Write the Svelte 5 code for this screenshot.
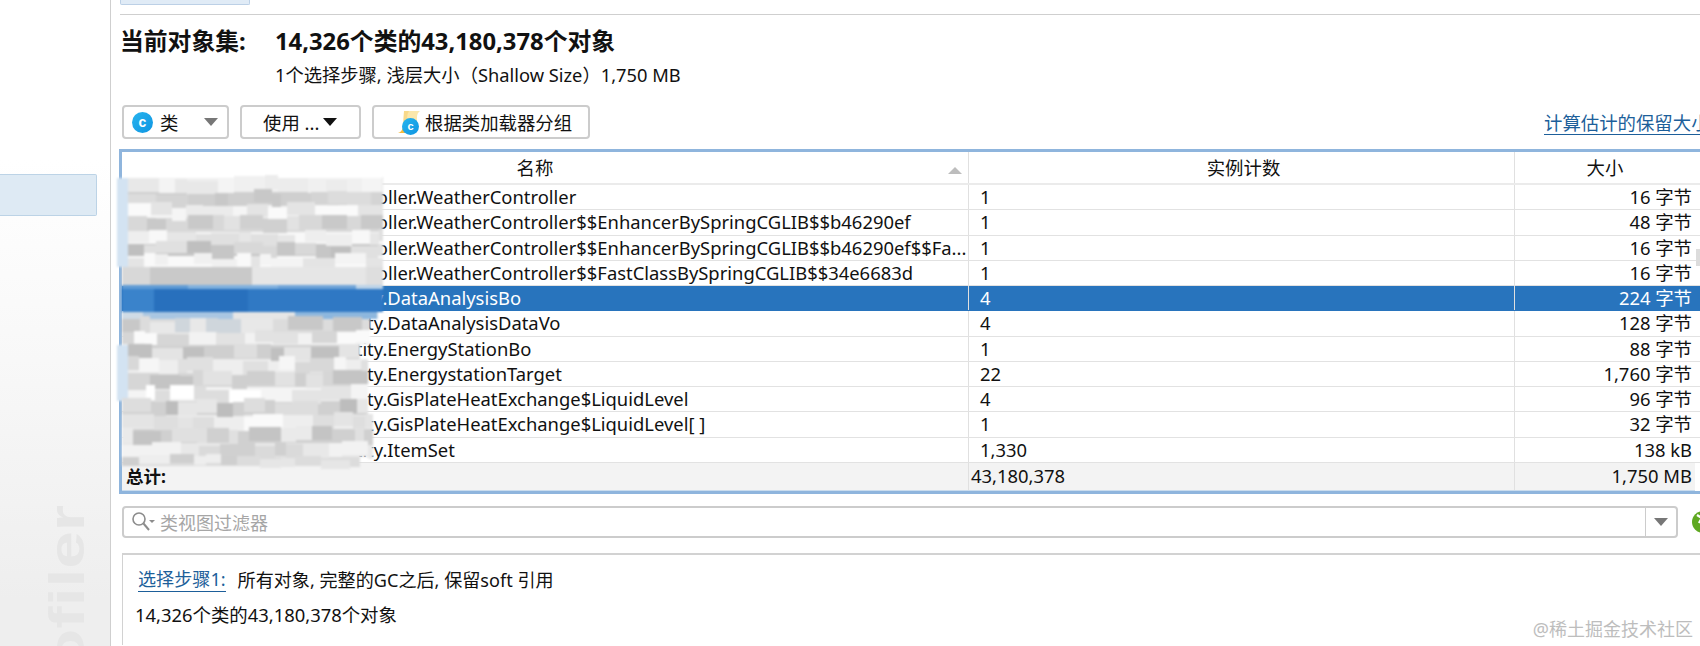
<script>
  // class histogram rows, name is only the part that is not blurred out
  const rows = [
    { name: 'troller.WeatherController', count: '1', size: '16 字节', pkg: 'ctl' },
    { name: 'troller.WeatherController$$EnhancerBySpringCGLIB$$b46290ef', count: '1', size: '48 字节', pkg: 'ctl' },
    { name: 'troller.WeatherController$$EnhancerBySpringCGLIB$$b46290ef$$Fa...', count: '1', size: '16 字节', pkg: 'ctl' },
    { name: 'troller.WeatherController$$FastClassBySpringCGLIB$$34e6683d', count: '1', size: '16 字节', pkg: 'ctl' },
    { name: 'entity.DataAnalysisBo', count: '4', size: '224 字节', pkg: 'ent', selected: true },
    { name: 'entity.DataAnalysisDataVo', count: '4', size: '128 字节', pkg: 'ent' },
    { name: 'entity.EnergyStationBo', count: '1', size: '88 字节', pkg: 'ent' },
    { name: 'entity.EnergystationTarget', count: '22', size: '1,760 字节', pkg: 'ent' },
    { name: 'entity.GisPlateHeatExchange$LiquidLevel', count: '4', size: '96 字节', pkg: 'ent' },
    { name: 'entity.GisPlateHeatExchange$LiquidLevel[ ]', count: '1', size: '32 字节', pkg: 'ent' },
    { name: 'entity.ItemSet', count: '1,330', size: '138 kB', pkg: 'ent' }
  ];

  // blurred-out package names: height, right edge, left tint, palette, straight edges
  const bands = [
    [14, 383, 1, ['#f0f0f0', '#ececec', '#f4f4f4', '#e8e8e8']],
    [13, 383, 1, ['#cfcfcf', '#c8c8c8', '#d4d4d4', '#dcdcdc']],
    [13, 383, 1, ['#f5f5f5', '#ebebeb', '#e4e4e4', '#fafafa']],
    [14, 383, 1, ['#d8d8d8', '#c9c9c9', '#e2e2e2', '#d0d0d0']],
    [12, 383, 1, ['#f8f8f8', '#eeeeee', '#e6e6e6', '#e0e0e0']],
    [12, 383, 1, ['#c6c6c6', '#d8d8d8', '#bfbfbf', '#e0e0e0']],
    [11, 383, 1, ['#f9f9f9', '#f0f0f0', '#e4e4e4', '#f4f4f4']],
    [18, 383, 0, ['#d8d8d8', '#c9c9c9', '#e6e6e6', '#dedede'], 1],
    [4, 383, 0, ['#7fb0de', '#6ea3d8', '#bcd3e8', '#5f9bd5'], 1],
    [23, 383, 0, ['#3079c4', '#2f78c4', '#3a83cb', '#2870bd'], 1],
    [7, 378, 0, ['#8db7de', '#cfdbe6', '#a9c6e2', '#e6e6e6'], 1],
    [14, 370, 0, ['#dcdcdc', '#c8c8c8', '#e8e8e8', '#cfd6dc']],
    [12, 370, 0, ['#f2f2f2', '#e2e2e2', '#d6d6d6', '#fafafa']],
    [14, 360, 1, ['#cfcfcf', '#dedede', '#c0c0c0', '#e4e4e4']],
    [14, 368, 1, ['#eeeeee', '#e0e0e0', '#f6f6f6', '#d8d8d8']],
    [14, 368, 1, ['#d6d6d6', '#c4c4c4', '#e2e2e2', '#cfcfcf']],
    [14, 368, 1, ['#f4f4f4', '#e4e4e4', '#ffffff', '#dddddd']],
    [14, 368, 0, ['#d0d0d0', '#dddddd', '#bdbdbd', '#e6e6e6']],
    [14, 373, 0, ['#eeeeee', '#fafafa', '#dedede', '#e4e4e4']],
    [14, 373, 0, ['#d0d0d0', '#e0e0e0', '#c4c4c4', '#eaeaea']],
    [14, 373, 0, ['#e8e8e8', '#f2f2f2', '#dadada', '#d0d0d0']],
    [9, 360, 0, ['#dcdcdc', '#e6e6e6', '#cfcfcf', '#eeeeee']]
  ];

  let seed = 11;
  function rand(n) {
    seed = (seed * 1103 + 12345) % 65536;
    return (seed >> 6) % n;
  }

  const mosaic = bands.map(([h, right, tint, palette, straight]) => {
    // untinted bands leave the table's blue edge showing
    const inset = tint ? 0 : 5;
    const width = right - 117 - inset;
    const tiles = [];
    let used = 0;
    if (tint) {
      tiles.push({ w: 11, c: '#d3e3f2', dy: 0 });
      used = 11;
    }
    while (used < width) {
      const w = Math.min(9 + rand(24), width - used);
      tiles.push({ w, c: palette[rand(palette.length)], dy: straight ? 0 : rand(7) - 3 });
      used += w;
    }
    return { h, width, inset, base: palette[0], tiles };
  });
</script>

<div class="page">
  <aside class="sidebar">
    <div class="side-item"></div>
    <div class="brand">Profiler</div>
  </aside>

  <main class="content">
    <div class="tab"></div>
    <div class="rule"></div>

    <div class="title">
      <span class="title-label">当前对象集:</span>
      <span>14,326个类的43,180,378个对象</span>
    </div>
    <div class="subtitle">1个选择步骤, 浅层大小（Shallow Size）1,750 MB</div>

    <div class="toolbar">
      <button class="btn btn-class">
        <span class="class-icon">c</span>
        <span>类</span>
        <span class="caret gray"></span>
      </button>
      <button class="btn btn-use">
        <span>使用 ...</span>
        <span class="caret"></span>
      </button>
      <button class="btn btn-group">
        <span class="group-icon">
          <svg width="24" height="24" viewBox="0 0 24 24">
            <path d="M7 1h16q-3 2-3 6v12H6z" fill="#fbe7ab" />
            <path d="M7 1h5q-2 3-2 7v11H6z" fill="#f8d98a" />
            <path d="M1 23q4-1 5-6h12v6z" fill="#f6bb3c" />
          </svg>
          <span class="class-icon small">c</span>
        </span>
        <span>根据类加载器分组</span>
      </button>
      <span class="link estimate">计算估计的保留大小</span>
    </div>

    <div class="table">
      <div class="row head">
        <div class="cell name-head">名称<span class="sort"></span></div>
        <div class="cell center count-head">实例计数</div>
        <div class="cell center">大小</div>
      </div>
      {#each rows as row}
        <div class="row" class:selected={row.selected}>
          <div class="cell name {row.pkg}">{row.name}</div>
          <div class="cell count">{row.count}</div>
          <div class="cell size">{row.size}</div>
        </div>
      {/each}
      <div class="row total">
        <div class="cell total-label">总计:</div>
        <div class="cell total-count">43,180,378</div>
        <div class="cell size">1,750 MB</div>
      </div>
      <div class="mosaic">
        {#each mosaic as band}
          <div class="band" style="height:{band.h}px;width:{band.width}px;margin-left:{band.inset}px;background:{band.base}">
            {#each band.tiles as t}
              <span style="width:{t.w}px;background:{t.c};translate:0 {t.dy}px"></span>
            {/each}
          </div>
        {/each}
      </div>
      <div class="scroll-thumb"></div>
    </div>

    <div class="filter-row">
      <div class="filter">
        <svg class="search" width="24" height="22" viewBox="0 0 24 22" fill="none">
          <circle cx="8" cy="8" r="6" stroke="#8c8c8c" stroke-width="1.6" />
          <path d="M12.5 12.5L18 19" stroke="#8c8c8c" stroke-width="2" />
          <path d="M18 9h6l-3 3z" fill="#8c8c8c" />
        </svg>
        <span class="placeholder">类视图过滤器</span>
        <div class="filter-drop"><span class="caret gray"></span></div>
      </div>
      <svg class="go" width="22" height="22" viewBox="0 0 22 22">
        <circle cx="11" cy="11" r="11" fill="#5fa821" />
        <path d="M5 4l5 3-3 5" fill="none" stroke="#fff" stroke-width="2.4" />
      </svg>
    </div>

    <section class="steps">
      <div class="step"><span class="link">选择步骤1:</span><span class="step-text">所有对象, 完整的GC之后, 保留soft 引用</span></div>
      <div class="result">14,326个类的43,180,378个对象</div>
      <div class="watermark">@稀土掘金技术社区</div>
    </section>
  </main>
</div>

<style>
  :global(body) {
    margin: 0;
    background: #fff;
  }

  .page {
    display: flex;
    width: 1700px;
    height: 646px;
    overflow: hidden;
    color: #111;
    font-family: "Noto Sans", "Noto Sans CJK SC", sans-serif;
    font-size: 18.4px;
  }

  /* ========== Sidebar ========== */
  .sidebar {
    position: relative;
    flex: 0 0 110px;
    box-sizing: content-box;
    border-right: 1px solid #cfcfcf;
    background: linear-gradient(#fff 160px, #f8f8f8 360px, #eeeeee 600px);
    overflow: hidden;
  }

  .side-item {
    box-sizing: border-box;
    width: 97px;
    height: 42px;
    margin-top: 174px;
    background: #deeaf4;
    border: 1px solid #bcd3e6;
    border-left: none;
    border-radius: 0 2px 2px 0;
  }

  .brand {
    position: absolute;
    top: 505px;
    left: 42px;
    writing-mode: vertical-rl;
    transform-origin: top;
    transform: scaleY(1.35) translateY(100%) rotate(180deg);
    font-family: "Liberation Sans", sans-serif;
    font-size: 50px;
    font-weight: 700;
    line-height: 50px;
    color: #e6e6e6;
  }

  /* ========== Main ========== */
  .content {
    flex: 1;
    min-width: 0;
    padding-left: 8px;
    position: relative;
  }

  .tab {
    box-sizing: border-box;
    width: 130px;
    height: 5px;
    margin-left: 1px;
    background: #e0ebf6;
    border: 1px solid #bcd0e6;
    border-top: none;
    border-radius: 0 0 2px 2px;
  }

  .rule {
    height: 1px;
    margin: 9px 0 0 1px;
    background: #cfcfcf;
  }

  .title {
    display: flex;
    margin: 10px 0 0 1px;
    font-size: 23.8px;
    font-weight: 700;
    line-height: 32px;
  }

  .title-label {
    width: 155px;
  }

  .subtitle {
    margin: 6px 0 0 156px;
    font-size: 18.3px;
    line-height: 24px;
  }

  .toolbar {
    display: flex;
    align-items: center;
    margin: 18px 0 0 3px;
    height: 34px;
    position: relative;
  }

  .btn {
    display: flex;
    align-items: center;
    box-sizing: border-box;
    height: 34px;
    padding: 0;
    background: #fff;
    border: 2px solid #cccccc;
    border-radius: 4px;
    color: #111;
    font: inherit;
  }

  .btn-class {
    width: 107px;
    padding-left: 8px;
    margin-right: 11px;
  }

  .btn-class .caret {
    margin-left: 26px;
  }

  .btn-use {
    width: 121px;
    padding-left: 21px;
    margin-right: 11px;
  }

  .btn-use .caret {
    margin-left: 4px;
  }

  .btn-group {
    width: 218px;
    padding-left: 23px;
  }

  .class-icon {
    display: flex;
    align-items: center;
    justify-content: center;
    width: 21px;
    height: 21px;
    margin-right: 7px;
    border-radius: 50%;
    background: linear-gradient(135deg, #27b4ee, #0f95e2);
    color: #fff;
    font-family: "Liberation Sans", sans-serif;
    font-size: 14px;
    font-weight: 700;
    line-height: 1;
  }

  .class-icon.small {
    position: absolute;
    right: 2px;
    bottom: -1px;
    width: 17px;
    height: 17px;
    margin: 0;
    font-size: 11px;
  }

  .group-icon {
    position: relative;
    width: 24px;
    height: 24px;
    margin-right: 4px;
  }

  .group-icon svg {
    display: block;
  }

  .caret {
    width: 0;
    height: 0;
    border-left: 7px solid transparent;
    border-right: 7px solid transparent;
    border-top: 8px solid #111;
  }

  .caret.gray {
    border-top-color: #777;
  }

  .link {
    color: #1d5f9a;
    border-bottom: 1px solid #1d5f9a;
    line-height: 22px;
  }

  .estimate {
    position: absolute;
    left: 1422px;
    top: 7px;
    white-space: nowrap;
  }

  /* ========== Table ========== */
  .table {
    position: relative;
    margin-top: 10px;
    border-top: 3px solid #8fb5dd;
    border-bottom: 3px solid #8fb5dd;
    border-left: 3px solid #8fb5dd;
  }

  .row {
    display: grid;
    grid-template-columns: 846px 546px 181px;
    box-sizing: border-box;
    height: 25.27px;
    line-height: 24px;
    border-bottom: 1px solid #e2e2e2;
  }

  .row.head {
    height: 33px;
    line-height: 31px;
    border-bottom: 2px solid #ebebeb;
  }

  .row.selected {
    background: #2874bd;
    color: #fff;
    border-bottom-color: #2874bd;
  }

  .row.total {
    height: 28px;
    line-height: 26px;
    background: #f3f3f3;
    border-bottom: 1px solid #c9dcee;
    width: 1573px;
  }

  .cell {
    box-sizing: border-box;
    white-space: nowrap;
    overflow: hidden;
  }

  .cell + .cell {
    border-left: 1px solid #e0e0e0;
  }

  .center {
    text-align: center;
  }

  .count-head {
    padding-left: 4px;
  }

  .name-head {
    position: relative;
    padding-right: 20px;
    text-align: center;
  }

  .sort {
    position: absolute;
    right: 6px;
    top: 15px;
    border-left: 7px solid transparent;
    border-right: 7px solid transparent;
    border-bottom: 7px solid #bdbdbd;
  }

  .name.ctl {
    padding-left: 241px;
  }

  .name.ent {
    padding-left: 212px;
  }

  .count {
    padding-left: 11px;
  }

  .size {
    padding-right: 3px;
    text-align: right;
  }

  .total-label {
    padding-left: 4px;
    font-size: 17.5px;
    font-weight: 700;
  }

  .total-count {
    padding-left: 2px;
  }

  /* paint over the package names, like the blur in the screenshot */
  .mosaic {
    position: absolute;
    top: 26px;
    left: -5px;
    filter: blur(0.9px);
  }

  .band {
    display: flex;
  }

  .band span {
    flex: none;
    height: 100%;
  }

  .scroll-thumb {
    position: absolute;
    top: 97px;
    right: 0;
    width: 4px;
    height: 17px;
    background: #dcdcdc;
  }

  /* ========== Filter ========== */
  .filter-row {
    display: flex;
    align-items: center;
    margin: 12px 0 0 3px;
  }

  .filter {
    display: flex;
    flex: none;
    align-items: center;
    position: relative;
    box-sizing: border-box;
    width: 1556px;
    height: 32px;
    padding-left: 7px;
    border: 2px solid #cccccc;
    border-radius: 4px;
  }

  .placeholder {
    margin-left: 5px;
    color: #a6a6a6;
    font-size: 18px;
  }

  .filter-drop {
    display: flex;
    align-items: center;
    justify-content: center;
    position: absolute;
    top: 0;
    right: 0;
    bottom: 0;
    width: 30px;
    border-left: 1px solid #cccccc;
  }

  .go {
    flex: none;
    margin-left: 14px;
  }

  /* ========== Steps ========== */
  .steps {
    position: relative;
    box-sizing: border-box;
    height: 92px;
    margin: 15px 0 0 3px;
    border-top: 2px solid #d2d2d2;
    border-left: 1px solid #d2d2d2;
  }

  .step {
    display: flex;
    margin: 13px 0 0 15px;
    font-size: 18.1px;
    line-height: 24px;
  }

  .step-text {
    margin-left: 12px;
  }

  .result {
    margin: 11px 0 0 12px;
    line-height: 24px;
  }

  .watermark {
    position: absolute;
    right: 7px;
    bottom: 4px;
    color: #bdbdbd;
    font-size: 18px;
  }
</style>
